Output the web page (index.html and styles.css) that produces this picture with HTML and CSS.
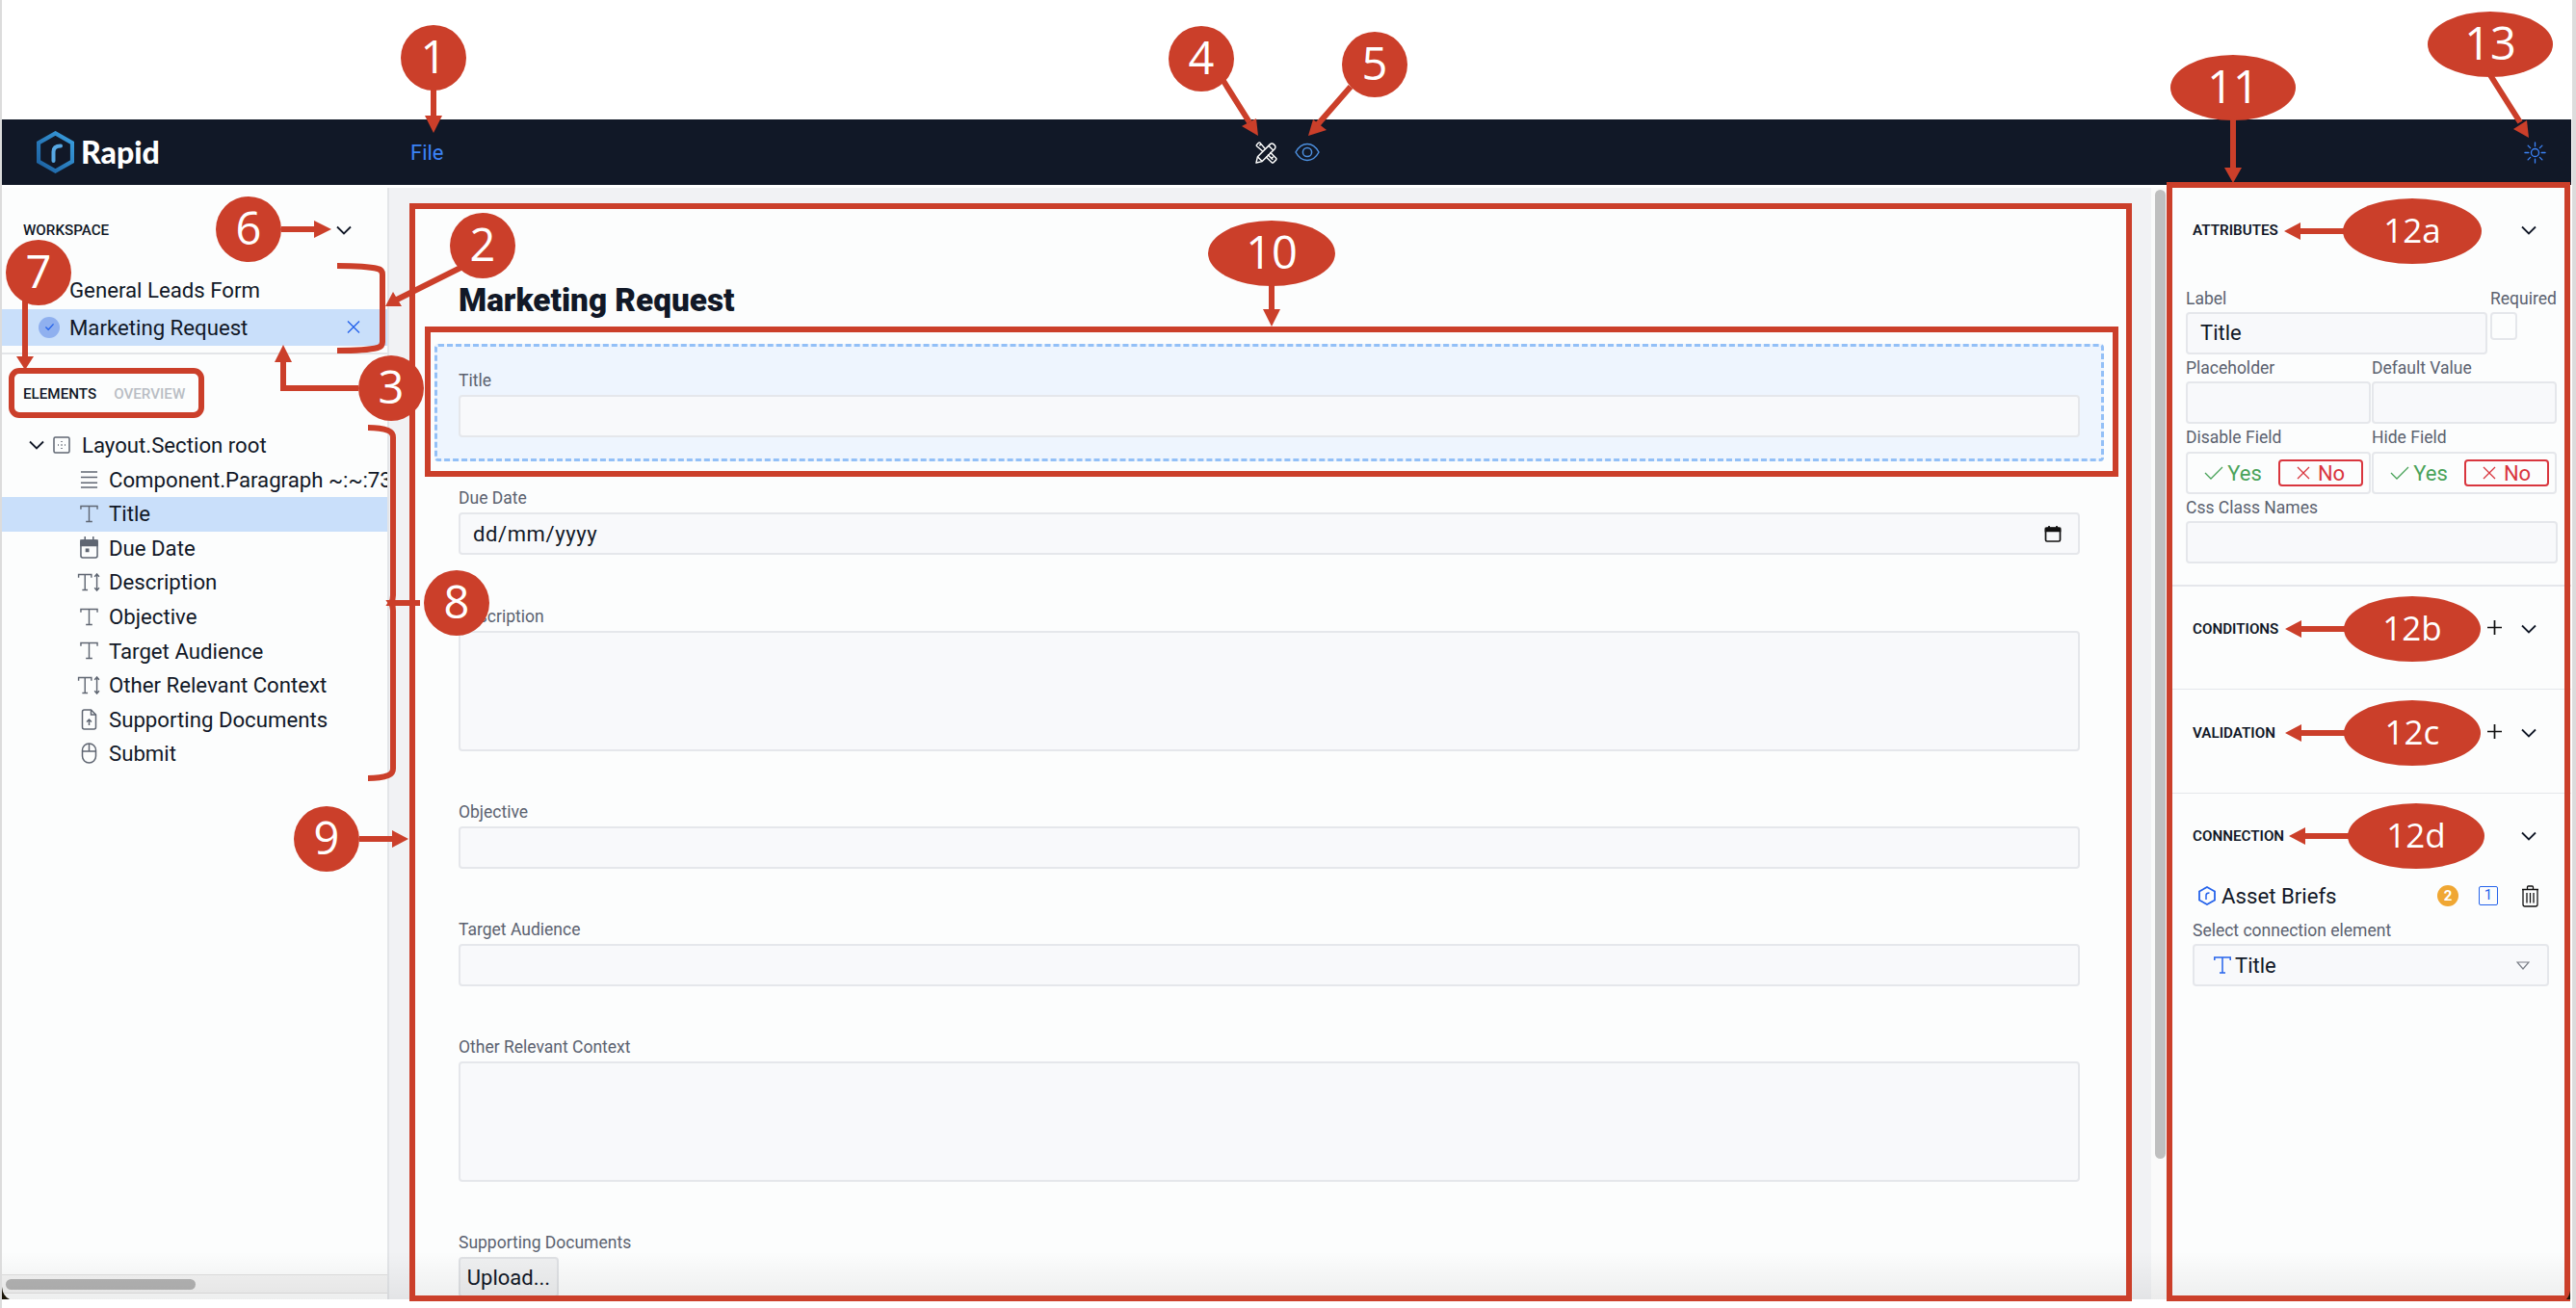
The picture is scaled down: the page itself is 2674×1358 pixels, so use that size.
FILE: index.html
```html
<!DOCTYPE html>
<html lang="en">
<head>
<meta charset="utf-8">
<title>Rapid form builder</title>
<link rel="stylesheet" href="styles.css">
</head>
<body>
<div class="page">
  <div class="top-space"></div>
  <header class="nav">
    <div class="brand">
      <svg class="logo" viewBox="0 0 39 44"><defs><linearGradient id="lg" x1="0" y1="1" x2="1" y2="0"><stop offset="0" stop-color="#1b5e9e"/><stop offset="1" stop-color="#3a9fe0"/></linearGradient></defs><path d="M19.5 2.4 37 12.4V31.600L19.500 41.600 2 31.600V12.400Z" fill="none" stroke="url(#lg)" stroke-width="4.2"/><path d="M17.500 31V21.500C17.500 17.500 20.500 15.500 25 15.500" fill="none" stroke="#57a8e4" stroke-width="4" stroke-linecap="round"/></svg>
      <span class="brand-name">Rapid</span>
    </div>
    <span class="file">File</span>
    <div class="nav-center">
      <svg class="ico-tools" viewBox="0 0 24 24" fill="none" stroke="#fff" stroke-width="1.5" stroke-linejoin="round"><path d="M1 23 2.500 16.500 16 3a2.800 2.800 0 0 1 4 0l1 1a2.800 2.800 0 0 1 0 4L7.500 21.500Z"/><path d="M2.500 16.500 7.500 21.500M14.500 4.500l5 5"/><path d="M8 10.500 1.700 5a1.200 1.200 0 0 1 0-1.700L3.600 1.400a1.200 1.200 0 0 1 1.700 0L10.500 7.500M13.500 14 19 19.500M16 11.500 22.600 18a1.200 1.200 0 0 1 0 1.700l-2.900 2.900a1.200 1.200 0 0 1-1.700 0L11.500 16.500M4.500 4.500 6 3M18 18l1.500-1.500"/></svg>
      <svg class="ico-eye" viewBox="0 0 26 20" fill="none" stroke="#4d90e0" stroke-width="1.500"><path d="M1 10C4 4.500 8 1.500 13 1.500S22 4.500 25 10C22 15.500 18 18.500 13 18.500S4 15.500 1 10Z"/><circle cx="13" cy="10" r="4.600"/></svg>
    </div>
    <svg class="ico-sun" viewBox="0 0 24 24" fill="none" stroke="#3b82f6" stroke-width="1.400" stroke-linecap="round"><circle cx="12" cy="12" r="4.200"/><path d="M12 1v4M12 19v4M1 12h4M19 12h4M4.300 4.300l2.600 2.600M17.100 17.100l2.600 2.600M4.300 19.700l2.600-2.600M17.100 6.900l2.600-2.600"/></svg>
  </header>

  <div class="workspace">
    <aside class="sidebar">
      <div class="side-head">
        <span class="caps">WORKSPACE</span>
        <svg class="chev" viewBox="0 0 16 10"><path d="M1 1.500 8 8.500 15 1.500"/></svg>
      </div>
      <div class="forms">
        <div class="form-row"><span class="form-name">General Leads Form</span></div>
        <div class="form-row form-row-on">
          <span class="check-dot"><svg viewBox="0 0 12 10" fill="none" stroke="#2563eb" stroke-width="1.500"><path d="M1.500 5 4.500 8 10.500 1.500"/></svg></span>
          <span class="form-name">Marketing Request</span>
          <svg class="ico-close" viewBox="0 0 14 14" fill="none" stroke="#2563eb" stroke-width="1.400"><path d="M1 1 13 13M13 1 1 13"/></svg>
        </div>
      </div>
      <div class="tabs"><span class="caps">ELEMENTS</span><span class="caps tab-off">OVERVIEW</span></div>
      <ul class="tree">
        <li class="tree-row tree-root">
          <svg class="chev chev-tree" viewBox="0 0 16 10"><path d="M1 1.500 8 8.500 15 1.500"/></svg>
          <svg class="ico-root" viewBox="0 0 18 18" fill="none" stroke="#5f6672" stroke-width="1.500"><rect x="1" y="1" width="16" height="16" rx="1.500"/><path d="M9 5v1M9 8.500v1M9 12v1M5 9h1M8.500 9h1M12 9h1"/></svg>
          <span>Layout.Section root</span>
        </li>
        <li class="tree-row"><svg class="ico" viewBox="0 0 20 20" fill="none" stroke="#5f6672" stroke-width="1.600"><path d="M1 2h18M1 8h18M1 14h18M1 19h18"/></svg><span>Component.Paragraph ~:~:73</span></li>
        <li class="tree-row tree-row-on"><svg class="ico" viewBox="0 0 20 20" fill="none" stroke="#5f6672" stroke-width="1.500"><path d="M1 5V1.500H19V5M10 1.500V18.500M6.500 18.500H13.500"/></svg><span>Title</span></li>
        <li class="tree-row"><svg class="ico ico-cal" viewBox="0 0 20 24" fill="none" stroke="#5f6672" stroke-width="1.600"><rect x="1" y="4" width="18" height="19" rx="2"/><path d="M1 4h18v6H1z" fill="#5f6672"/><path d="M5.500 0v4M14.500 0v4"/><rect x="6" y="13" width="4" height="4" fill="#5f6672" stroke="none"/></svg><span>Due Date</span></li>
        <li class="tree-row"><svg class="ico ico-wide" viewBox="0 0 25 20" fill="none" stroke="#5f6672" stroke-width="1.500"><path d="M1 5V1.500H15V5M8 1.500V18.500M5 18.500H11"/><path d="M21 1V19M18.500 4 21 1l2.500 3M18.500 16 21 19l2.500-3"/></svg><span>Description</span></li>
        <li class="tree-row"><svg class="ico" viewBox="0 0 20 20" fill="none" stroke="#5f6672" stroke-width="1.500"><path d="M1 5V1.500H19V5M10 1.500V18.500M6.500 18.500H13.500"/></svg><span>Objective</span></li>
        <li class="tree-row"><svg class="ico" viewBox="0 0 20 20" fill="none" stroke="#5f6672" stroke-width="1.500"><path d="M1 5V1.500H19V5M10 1.500V18.500M6.500 18.500H13.500"/></svg><span>Target Audience</span></li>
        <li class="tree-row"><svg class="ico ico-wide" viewBox="0 0 25 20" fill="none" stroke="#5f6672" stroke-width="1.500"><path d="M1 5V1.500H15V5M8 1.500V18.500M5 18.500H11"/><path d="M21 1V19M18.500 4 21 1l2.500 3M18.500 16 21 19l2.500-3"/></svg><span>Other Relevant Context</span></li>
        <li class="tree-row"><svg class="ico ico-doc" viewBox="0 0 16 22" fill="none" stroke="#5f6672" stroke-width="1.500"><path d="M1 3a2 2 0 0 1 2-2h7l5 5v13a2 2 0 0 1-2 2H3a2 2 0 0 1-2-2Z"/><path d="M10 1v5h5M8 17v-6M5.500 13.500 8 11l2.500 2.500"/></svg><span>Supporting Documents</span></li>
        <li class="tree-row"><svg class="ico ico-doc" viewBox="0 0 16 22" fill="none" stroke="#5f6672" stroke-width="1.500"><rect x="1" y="1" width="14" height="20" rx="7"/><path d="M1 9h14M8 1v8"/></svg><span>Submit</span></li>
      </ul>
      <div class="hscroll"><div class="hthumb"></div></div>
    </aside>

    <main class="main">
      <section class="card">
        <h1 class="form-title">Marketing Request</h1>
        <div class="field field-on"><label class="lbl">Title</label><input class="input"></div>
        <div class="field field-date"><label class="lbl">Due Date</label>
          <div class="input input-date"><span>dd/mm/yyyy</span>
            <svg class="ico-date" viewBox="0 0 18 18" fill="none" stroke="#111" stroke-width="1.700"><rect x="1.500" y="2.500" width="15" height="14" rx="1.500"/><path d="M1.500 3h15v3h-15z" fill="#111"/><path d="M5 .5v2M13 .5v2"/></svg>
          </div>
        </div>
        <div class="field"><label class="lbl">Description</label><textarea class="input area"></textarea></div>
        <div class="field"><label class="lbl">Objective</label><input class="input"></div>
        <div class="field"><label class="lbl">Target Audience</label><input class="input"></div>
        <div class="field"><label class="lbl">Other Relevant Context</label><textarea class="input area"></textarea></div>
        <div class="field"><label class="lbl">Supporting Documents</label><button class="upload">Upload...</button></div>
      </section>
    </main>

    <div class="vscroll"><div class="vthumb"></div></div>

    <aside class="panel">
      <section class="sec sec-attr">
        <div class="sec-head"><span class="caps caps-b">ATTRIBUTES</span><svg class="chev sec-chev" viewBox="0 0 16 10"><path d="M1 1.500 8 8.500 15 1.500"/></svg></div>
        <div class="attr-grid">
          <div class="attr-row row-label">
            <div><label class="lbl">Label</label><div class="input input-val">Title</div></div>
            <div><label class="lbl">Required</label><div class="checkbox"></div></div>
          </div>
          <div class="attr-row row-two">
            <div><label class="lbl">Placeholder</label><div class="input"></div></div>
            <div><label class="lbl">Default Value</label><div class="input"></div></div>
          </div>
          <div class="attr-row row-two">
            <div><label class="lbl">Disable Field</label>
              <div class="toggle"><span class="seg-yes"><svg viewBox="0 0 20 14" fill="none" stroke="#4aa35a" stroke-width="1.300"><path d="M1 7 7 13 19 1"/></svg>Yes</span><span class="seg-no"><svg viewBox="0 0 14 14" fill="none" stroke="#d9363e" stroke-width="1.300"><path d="M1 1 13 13M13 1 1 13"/></svg>No</span></div>
            </div>
            <div><label class="lbl">Hide Field</label>
              <div class="toggle"><span class="seg-yes"><svg viewBox="0 0 20 14" fill="none" stroke="#4aa35a" stroke-width="1.300"><path d="M1 7 7 13 19 1"/></svg>Yes</span><span class="seg-no"><svg viewBox="0 0 14 14" fill="none" stroke="#d9363e" stroke-width="1.300"><path d="M1 1 13 13M13 1 1 13"/></svg>No</span></div>
            </div>
          </div>
          <div><label class="lbl">Css Class Names</label><div class="input"></div></div>
        </div>
      </section>
      <section class="sec sec-thin">
        <div class="sec-head"><span class="caps caps-b">CONDITIONS</span><svg class="plus" viewBox="0 0 14 14" fill="none" stroke="#111" stroke-width="1.600"><path d="M7 0v14M0 7h14"/></svg><svg class="chev" viewBox="0 0 16 10"><path d="M1 1.500 8 8.500 15 1.500"/></svg></div>
      </section>
      <section class="sec sec-thin">
        <div class="sec-head"><span class="caps caps-b">VALIDATION</span><svg class="plus" viewBox="0 0 14 14" fill="none" stroke="#111" stroke-width="1.600"><path d="M7 0v14M0 7h14"/></svg><svg class="chev" viewBox="0 0 16 10"><path d="M1 1.500 8 8.500 15 1.500"/></svg></div>
      </section>
      <section class="sec sec-conn">
        <div class="sec-head"><span class="caps caps-b">CONNECTION</span><svg class="chev sec-chev" viewBox="0 0 16 10"><path d="M1 1.500 8 8.500 15 1.500"/></svg></div>
        <div class="conn-row">
          <svg class="ico-hex" viewBox="0 0 18 20" fill="none" stroke="#2563eb" stroke-width="1.800"><path d="M9 1 17 5.500V14.500L9 19 1 14.500V5.500Z"/><path d="M8 14V9.500C8 8 9.500 7 11.500 7" stroke-width="1.500"/></svg>
          <span class="conn-name">Asset Briefs</span>
          <span class="badge">2</span>
          <span class="box-one">1</span>
          <svg class="ico-trash" viewBox="0 0 19 23" fill="none" stroke="#111" stroke-width="1.300"><path d="M1 4.500h17M6.500 4.500V2a1 1 0 0 1 1-1h4a1 1 0 0 1 1 1v2.500M2 4.500V20a2 2 0 0 0 2 2h11a2 2 0 0 0 2-2V4.500M6 8v10.500M9.500 8v10.500M13 8v10.500"/></svg>
        </div>
        <label class="lbl conn-lbl">Select connection element</label>
        <div class="input conn-select">
          <svg class="ico-t-blue" viewBox="0 0 18 18" fill="none" stroke="#2563eb" stroke-width="1.500"><path d="M.800 4V1H17.200V4M9 1V17M6 17H12"/></svg>
          <span>Title</span>
          <svg class="ico-caret" viewBox="0 0 14 9" fill="none" stroke="#7a7f87" stroke-width="1.200"><path d="M1 1H13L7 8Z"/></svg>
        </div>
      </section>
    </aside>
    <div class="fade"></div>
  </div>
</div>

<svg class="anno" viewBox="0 0 2674 1358" width="2674" height="1358">
  <g class="anno-line">
    <rect x="428" y="214" width="1782" height="1134"/>
    <rect x="444" y="342" width="1752" height="150"/>
    <rect x="2252" y="192" width="413" height="1156"/>
    <rect x="12" y="385" width="197" height="46" rx="8"/>
    <path d="M350 276Q380 276 392 279Q397 280 397 285V355Q397 360 392 361Q380 364 350 364"/>
    <path d="M382 444Q395 444 403 447Q408 449 408 454V618Q408 623 406 626H436H406Q408 629 408 634V798Q408 803 403 805Q395 808 382 808"/>
    <path d="M450 90V122M478 278 410 312M372 403H294V374M292 238H328M26 310V372M373 871H409M1270 84 1297 127M1402 90 1368 129M1320 295V322M2318 120V176M2585 78 2616 127M2434 240H2386M2434 653H2388M2434 761H2388M2440 868H2392"/>
  </g>
  <g class="anno-fill">
    <path d="M441 120H459L450 138Z"/>
    <path d="M400 318 408 303 417 318Z"/>
    <path d="M294 358 303 376H285Z"/>
    <path d="M344 238 326 229V247Z"/>
    <path d="M26 384 17 370H35Z"/>
    <path d="M424 871 407 862V880Z"/>
    <path d="M1306 141 1289 131 1304 123Z"/>
    <path d="M1358 141 1363 124 1377 135Z"/>
    <path d="M1320 339 1311 321H1329Z"/>
    <path d="M2318 190 2309 174H2327Z"/>
    <path d="M2625 143 2609 134 2623 125Z"/>
    <path d="M2371 240 2388 231V249Z"/>
    <path d="M2372 653 2389 644V662Z"/>
    <path d="M2372 761 2389 752V770Z"/>
    <path d="M2376 868 2393 859V877Z"/>
    <circle cx="450" cy="60" r="34"/><circle cx="501" cy="255" r="34"/><circle cx="406" cy="403" r="34"/>
    <circle cx="1247" cy="61" r="34"/><circle cx="1427" cy="67" r="34"/><circle cx="258" cy="238" r="34"/>
    <circle cx="40" cy="283" r="34"/><circle cx="474" cy="626" r="34"/><circle cx="339" cy="871" r="34"/>
    <ellipse cx="1320" cy="263" rx="66" ry="34"/><ellipse cx="2318" cy="91" rx="65" ry="34"/><ellipse cx="2585" cy="46" rx="65" ry="34"/>
    <ellipse cx="2504" cy="240" rx="72" ry="34"/><ellipse cx="2504" cy="653" rx="71" ry="34"/><ellipse cx="2504" cy="761" rx="71" ry="34"/><ellipse cx="2508" cy="868" rx="71" ry="34"/>
    <path class="corner" d="M2 1336Q3 1346 10 1349H2ZM2668 1340V1349H2664Q2667 1346 2668 1340Z"/>
  </g>
  <g class="anno-num">
    <text x="450" y="76">1</text><text x="501" y="271">2</text><text x="406" y="419">3</text>
    <text x="1247" y="77">4</text><text x="1427" y="83">5</text><text x="258" y="254">6</text>
    <text x="40" y="299">7</text><text x="474" y="642">8</text><text x="339" y="887">9</text>
    <text x="1320" y="279">10</text><text x="2318" y="107">11</text><text x="2585" y="62">13</text>
  </g>
  <g class="anno-num anno-small">
    <text x="2504" y="252">12a</text><text x="2504" y="665">12b</text><text x="2504" y="773">12c</text><text x="2508" y="880">12d</text>
  </g>
</svg>
</body>
</html>
```
FILE: styles.css
```css
* { box-sizing: border-box; }
html, body { margin: 0; padding: 0; }
body { background: #fff; font-family: Roboto, "Liberation Sans", sans-serif; color: #111827; overflow: hidden; width: 2674px; height: 1358px; position: relative; }
.page { width: 2674px; height: 1358px; border-left: 2px solid #dcdcdc; border-right: 4px solid #dcdcdc; padding-right: 1px; padding-bottom: 9px; display: flex; flex-direction: column; }
.top-space { height: 124px; flex: none; }

.nav { height: 68px; flex: none; background: #111827; display: flex; align-items: center; padding-left: 36px; padding-right: 26px; }
.brand { width: 388px; display: flex; align-items: center; gap: 7px; }
.logo { width: 39px; height: 44px; flex: none; }
.brand-name { color: #fff; font-family: Lato, sans-serif; font-weight: 900; font-size: 32px; line-height: 1; }
.file { color: #3b82f6; font-size: 22px; width: 34px; }
.nav-center { margin-left: 843px; display: flex; align-items: center; gap: 18px; }
.ico-tools { width: 23px; height: 23px; }
.ico-eye { width: 26px; height: 20px; }
.ico-sun { width: 23px; height: 23px; margin-left: auto; }

.workspace { flex: 1; min-height: 0; margin-top: 3px; background: #f1f2f4; display: grid; grid-template-columns: 402px 1829px 19px 417px; position: relative; overflow: hidden; }
.fade { position: absolute; left: 0; right: 0; bottom: 0; height: 50px; background: linear-gradient(to bottom, rgba(0,0,0,0), rgba(0,0,0,.06)); pointer-events: none; }

.sidebar { background: #fcfdfd; border-right: 2px solid #e3e5e8; display: flex; flex-direction: column; min-width: 0; overflow: hidden; }
.caps { font-size: 15.2px; font-weight: 500; color: #111827; line-height: 20px; }
.caps-b { font-weight: 600; }
.tab-off { color: #b9bdc4; }
.chev { width: 16px; height: 10px; flex: none; fill: none; stroke: #111827; stroke-width: 1.8; }
.side-head { height: 44px; margin-top: 22px; padding: 0 37px 0 22px; display: flex; align-items: center; justify-content: space-between; }
.forms { margin-top: 21px; padding-bottom: 7px; border-bottom: 2px solid #e3e5e8; }
.form-row { height: 38px; display: flex; align-items: center; padding-left: 70px; padding-bottom: 1px; font-size: 22.2px; position: relative; }
.form-row-on { background: #c9dffa; padding-left: 38px; padding-right: 28px; margin-top: 1px; }
.form-name { flex: 1; white-space: nowrap; }
.check-dot { width: 22px; height: 22px; border-radius: 50%; background: #8fb0ef; display: flex; align-items: center; justify-content: center; margin-right: 10px; }
.check-dot svg { width: 11px; height: 9px; }
.ico-close { width: 14px; height: 15px; }
.tabs { margin-top: 31px; padding-left: 22px; display: flex; gap: 18px; }
.tree { list-style: none; margin: 26px 0 0; padding: 0; font-size: 22.2px; }
.tree-row { height: 35.55px; display: flex; align-items: center; padding-left: 81px; padding-bottom: 1px; white-space: nowrap; position: relative; }
.tree-row span { margin-left: 11px; }
.tree-root { padding-left: 28px; }
.tree-root span { margin-left: 12px; }
.tree-row-on { background: #c9dffa; }
.chev-tree { margin-right: 9px; }
.ico-root { width: 18px; height: 18px; flex: none; }
.ico { width: 19px; height: 19px; flex: none; }
.ico-cal { height: 23px; }
.ico-wide { width: 25px; margin-left: -3px; margin-right: -3px; }
.ico-doc { height: 22px; }
.hscroll { margin-top: auto; margin-bottom: 6px; height: 20px; background: #f3f3f3; border-top: 1px solid #e0e0e0; border-bottom: 1px solid #e0e0e0; padding: 4px 0 0 4px; flex: none; }
.hthumb { width: 197px; height: 11px; background: #b3b3b3; border-radius: 6px; }

.main { padding: 19px 23px 0 24px; min-width: 0; overflow: hidden; }
.card { background: #fcfdfd; padding: 78px 26px 0 23px; height: 1400px; }
.form-title { font-size: 33.3px; font-weight: 900; line-height: 40px; margin: 0 0 25px 25px; color: #111827; }
.field { padding: 26px 23px 23px; border: 2px solid transparent; display: block; }
.field-on { background: #eef5fe; border: 3px dashed #93c0f7; border-radius: 4px; padding: 25px 22px 22px; }
.field-date { margin-bottom: 1px; }
.lbl { display: block; font-size: 17.5px; line-height: 20px; color: #5b6270; margin-bottom: 5px; white-space: nowrap; }
.input { display: block; width: 100%; height: 44px; background: #f8f9fb; border: 2px solid #e5e7eb; border-radius: 4px; padding: 0; margin: 0; outline: none; resize: none; }
.area { height: 125px; }
.input-date { display: flex; align-items: center; justify-content: space-between; padding: 0 16px 0 13px; font-size: 22px; letter-spacing: .6px; color: #111827; }
.ico-date { width: 18px; height: 19px; margin-right: 1px; }
.upload { height: 42px; width: 104px; background: #eff0f1; border: 2px solid #dfe1e4; border-radius: 4px; font: inherit; font-size: 22px; color: #111827; padding: 0; display: block; }

.vscroll { background: #fafafa; padding: 2px 0 0 4px; }
.vthumb { width: 11px; height: 1006px; background: #bfbfbf; border-radius: 6px; }

.panel { background: #fcfdfd; padding: 0 14px 0 17px; display: flex; flex-direction: column; min-width: 0; }
.sec { margin: 0 -14px 0 -17px; padding: 0 14px 0 17px; border-bottom: 1px solid #e5e7eb; }
.sec-head { display: flex; align-items: center; height: 22px; padding: 0 22px 0 7px; }
.sec-head .chev { margin-left: 20px; }
.sec-head .sec-chev { margin-left: auto; }
.plus { width: 15px; height: 15px; margin-left: auto; margin-top: -4px; }
.sec-attr { padding-top: 33px; padding-bottom: 22px; border-bottom-width: 2px; }
.sec-thin { padding-top: 33px; height: 107px; }
.sec-thin + .sec-thin { padding-top: 34px; height: 108px; }
.sec-conn { border: 0; padding-top: 33px; }
.attr-grid { margin-top: 50px; display: flex; flex-direction: column; gap: 4px; }
.attr-grid .lbl { margin-bottom: 4px; }
.attr-row { display: grid; gap: 0; }
.row-label { grid-template-columns: 313px 72px; column-gap: 3px; }
.row-two { grid-template-columns: 192px 192px; column-gap: 1px; }
.input-val { font-size: 22px; color: #111827; padding-left: 13px; line-height: 40px; }
.checkbox { width: 28px; height: 29px; background: #fcfdfd; border: 2px solid #e5e7eb; border-radius: 4px; }
.toggle { height: 44px; margin-top: 5px; border: 2px solid #e5e7eb; border-radius: 4px; display: flex; align-items: center; font-size: 22px; }
.seg-yes { width: 94px; display: flex; align-items: center; justify-content: center; color: #4aa35a; gap: 4px; }
.seg-yes svg { width: 20px; height: 14px; }
.seg-no { width: 88px; height: 28px; border: 2px solid #d9363e; border-radius: 4px; color: #d9363e; display: flex; align-items: center; justify-content: center; gap: 8px; }
.seg-no svg { width: 14px; height: 14px; }
.conn-row { display: flex; align-items: center; height: 30px; margin-top: 36px; padding-left: 13px; }
.ico-hex { width: 18px; height: 20px; }
.conn-name { font-size: 22.2px; margin-left: 6px; color: #111827; }
.badge { margin-left: auto; width: 22px; height: 22px; border-radius: 50%; background: #f0a733; color: #fff; font-size: 15px; font-weight: 700; display: flex; align-items: center; justify-content: center; }
.box-one { width: 20px; height: 20px; margin-left: 21px; border: 1.5px solid #2563eb; border-radius: 2px; color: #2563eb; font-size: 15px; line-height: 17px; text-align: center; }
.ico-trash { width: 19px; height: 23px; margin-left: 24px; margin-right: 19px; }
.conn-lbl { margin: 11px 0 4px 7px; }
.conn-select { width: 370px; margin-left: 7px; display: flex; align-items: center; padding-left: 20px; font-size: 22px; color: #111827; }
.conn-select span { margin-left: 4px; }
.ico-t-blue { width: 18px; height: 18px; }
.ico-caret { width: 14px; height: 9px; margin-left: auto; margin-right: 18px; }

.anno { position: absolute; left: 0; top: 0; pointer-events: none; }
.anno-line { fill: none; stroke: #cb3f2a; stroke-width: 6; }
.anno-fill { fill: #cb3f2a; }
.corner { fill: #1a1508; }
.anno-num { fill: #fff; font-family: "Open Sans", sans-serif; font-size: 47px; text-anchor: middle; }
.anno-small { font-size: 35px; }
```
